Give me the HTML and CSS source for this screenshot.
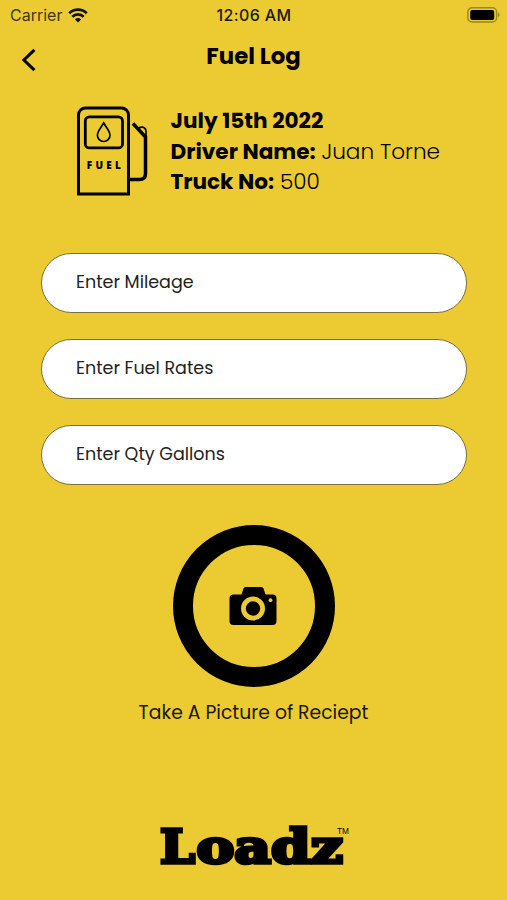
FILE: index.html
```
<!DOCTYPE html>
<html lang="en">
<head>
  <meta charset="UTF-8">
  <meta name="viewport" content="width=device-width, initial-scale=1.0">
  <title>Fuel Log</title>
  <link rel="stylesheet" href="styles.css">
</head>
<body>
  <div class="screen">
    <div class="status-bar">
      <div class="carrier">
        <span>Carrier</span>
        <svg class="wifi" width="20" height="15" viewBox="0 0 20 15" fill="none" stroke="#111" stroke-width="2.6">
          <path d="M1.2 5.2a12.6 12.6 0 0 1 17.6 0"/>
          <path d="M4.3 8.7a8.2 8.2 0 0 1 11.4 0"/>
          <path d="M10 14.5L6.9 11.4a4.5 4.5 0 0 1 6.2 0z" fill="#111" stroke="none"/>
        </svg>
      </div>
      <span class="clock">12:06 AM</span>
      <svg class="battery" width="33" height="16" viewBox="0 0 33 16">
        <rect x=".8" y=".8" width="28.8" height="14.2" rx="4.3" fill="none" stroke="#998522" stroke-width="1.4"/>
        <rect x="3.2" y="3.1" width="24" height="9.8" rx="2" fill="#000"/>
        <path d="M31 5.6c2 .8 2 3.8 0 4.6z" fill="#998522"/>
      </svg>
    </div>

    <header class="header">
      <svg class="back" width="16" height="24" viewBox="0 0 16 24" fill="none" stroke="#000" stroke-width="3">
        <path d="M13.4 1.8L2.9 12l10.5 10.2"/>
      </svg>
      <h1 class="title">Fuel Log</h1>
    </header>

    <section class="info">
      <svg class="pump" width="74" height="92" viewBox="0 0 74 92" fill="none" stroke="#000">
        <path d="M2.5 88V9a7 7 0 0 1 7-7h36a7 7 0 0 1 7 7v79z" stroke-width="3"/>
        <rect x="9.3" y="10.9" width="37.2" height="31" rx="4" stroke-width="2.8"/>
        <path d="M27.7 17c-2.2 4-6.3 8-6.3 12.2a6.3 6.3 0 0 0 12.6 0c0-4.2-4.1-8.2-6.3-12.2z" stroke-width="1.7"/>
        <path d="M53 73.5h10.500q6 0 6-6V31L57 17.500" stroke-width="3.5"/>
        <path d="M62 23.500c1-3.500 7.500-3.500 8 1.500v8" stroke-width="1.7"/>
        <text class="pump-label" x="10.8" y="62.8" textLength="34" lengthAdjust="spacing">FUEL</text>
      </svg>
      <div class="details">
        <p class="date"><b>July 15th 2022</b></p>
        <p class="driver"><b>Driver Name:</b> <span>Juan Torne</span></p>
        <p class="truck"><b>Truck No:</b> <span>500</span></p>
      </div>
    </section>

    <form class="form">
      <input class="field mileage" type="text" placeholder="Enter Mileage">
      <input class="field rates" type="text" placeholder="Enter Fuel Rates">
      <input class="field gallons" type="text" placeholder="Enter Qty Gallons">
    </form>

    <div class="receipt">
      <button class="camera-btn" type="button" aria-label="Take a picture">
        <svg class="camera" width="48" height="40" viewBox="0 0 48 40">
          <path d="M4.5 8.5h8l2-6q.5-1.500 2-1.500h16q1.500 0 2 1.500l2 6h7q4 0 4 4v22.500q0 4-4 4h-39q-4 0-4-4V12.500q0-4 4-4z"/>
          <circle class="lens" cx="24" cy="22.5" r="9.6"/>
          <circle class="flash" cx="41.5" cy="14.2" r="1.9"/>
        </svg>
      </button>
      <p class="caption">Take A Picture of Reciept</p>
    </div>

    <footer class="footer">
      <svg class="brand" width="192" height="64" viewBox="0 0 192 64">
        <text class="logo" y="49"><tspan x="2" textLength="35" lengthAdjust="spacingAndGlyphs">L</tspan><tspan x="38.5" textLength="146.5" lengthAdjust="spacingAndGlyphs">oadz</tspan></text>
        <text class="tm" x="179" y="20" textLength="12" lengthAdjust="spacingAndGlyphs">TM</text>
      </svg>
    </footer>
  </div>
</body>
</html>
```
FILE: styles.css
```
* {
  box-sizing: border-box;
}

body {
  margin: 0;
  background-color: #eccb32;
  color: #000;
  font-family: "Poppins", "Inter", sans-serif;
}

p, h1 {
  margin: 0;
}

.screen {
  width: 507px;
  height: 900px;
  overflow: hidden;
}

.status-bar {
  display: grid;
  grid-template-columns: 1fr auto 1fr;
  align-items: center;
  height: 30px;
  padding: 0 7px 0 10px;
  font-family: "Inter", sans-serif;
  font-size: 16px;
}

.carrier {
  display: flex;
  align-items: center;
  gap: 6px;
  color: #40370e;
}

.clock {
  margin-right: 2px;
  font-weight: 500;
  letter-spacing: .35px;
  color: #1d1906;
}

.battery {
  justify-self: end;
}

.header {
  display: grid;
  grid-template-columns: 1fr auto 1fr;
  height: 76px;
  padding: 10px 21px 0;
}

.back {
  margin-top: 8px;
}

.title {
  font-size: 22.8px;
  line-height: 32px;
  font-weight: 700;
}

.info {
  display: flex;
  gap: 20.5px;
  height: 147px;
  padding-left: 76px;
}

.pump-label {
  font: 800 10px "Open Sans", sans-serif;
  fill: #000;
  stroke: none;
}

.details {
  font-size: 21.6px;
  line-height: 30.5px;
  white-space: nowrap;
}

.details span {
  font-weight: 300;
}

.form {
  display: flex;
  flex-direction: column;
  gap: 26px;
  padding: 0 40px 0 41px;
}

.field {
  width: 100%;
  height: 60px;
  padding: 0 34px 3px;
  border: 1px solid #77703f;
  border-radius: 30px;
  background-color: #fff;
  font-family: inherit;
  font-size: 17.5px;
  outline: none;
}

.field::placeholder {
  color: #222;
  opacity: 1;
}

.receipt {
  display: flex;
  flex-direction: column;
  align-items: center;
  padding-top: 40px;
}

.camera-btn {
  display: flex;
  align-items: center;
  justify-content: center;
  width: 162px;
  height: 162px;
  padding: 0 1px 0 0;
  border: 20px solid #000;
  border-radius: 50%;
  background: none;
}

.lens {
  fill: #000;
  stroke: #eccb32;
  stroke-width: 4.8;
}

.flash {
  fill: #eccb32;
}

.caption {
  margin-top: 11px;
  font-size: 18.8px;
  line-height: 29px;
  color: #1a1706;
}

.footer {
  display: flex;
  justify-content: center;
  padding-top: 87px;
}

.logo {
  font: 700 46.5px "DejaVu Serif", serif;
  stroke: #000;
  stroke-width: 3.6;
}

.tm {
  font: 9.5px "Liberation Sans", sans-serif;
}
```
